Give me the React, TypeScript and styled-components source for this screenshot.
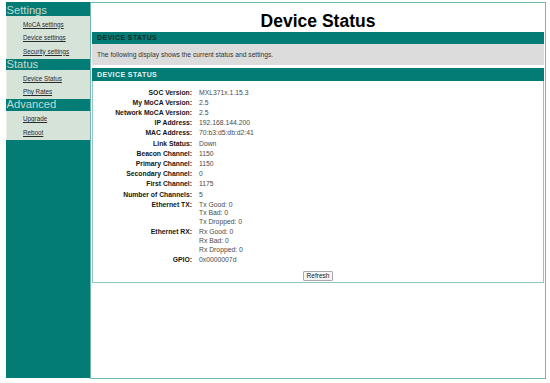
import React from 'react';
import styled, { createGlobalStyle } from 'styled-components';

const teal = '#037c76';
const frame = '#71b8b2';

const GlobalStyle = createGlobalStyle`
  html, body {
    margin: 0;
    padding: 0;
    background: #fff;
    font-family: "Liberation Sans", Arial, sans-serif;
    color: #222;
  }
`;

const Page = styled.div`
  display: flex;
  height: 377px;
  padding: 2px 4px 0 6px;
`;

const Sidebar = styled.nav`
  width: 84px;
  height: 376px;
  background: ${teal};
  display: flex;
  flex-direction: column;
`;

const SectionTitle = styled.div<{ $first?: boolean }>`
  height: ${(p) => (p.$first ? '14px' : '11.5px')};
  padding-top: ${(p) => (p.$first ? '2px' : '0')};
  box-sizing: border-box;
  font-size: 11.2px;
  line-height: ${(p) => (p.$first ? '12px' : '11px')};
  color: #c6d9d0;
  padding-left: 0.5px;
`;

const LinkList = styled.ul`
  list-style: none;
  margin: 0;
  padding: 1.5px 0 0.5px;
  background: #d6e3d9;
  border-left: 1px solid #e8efe9;
`;

const NavItem = styled.li`
  height: 13.5px;
  font-size: 6.3px;
  line-height: 13.5px;
  padding-left: 16px;
`;

const NavLink = styled.a`
  color: #2b2b2b;
  text-decoration: underline;
`;

const Main = styled.main`
  flex: 1;
  border: 1px solid ${frame};
  padding: 0 1px;
  display: flex;
  flex-direction: column;
`;

const Title = styled.h1`
  margin: 0;
  height: 29px;
  box-sizing: border-box;
  padding-top: 7px;
  font-size: 17.5px;
  line-height: 22px;
  font-weight: bold;
  text-align: center;
  color: #000;
`;

const Bar = styled.div<{ $light?: boolean }>`
  height: ${(p) => (p.$light ? '13px' : '12px')};
  line-height: ${(p) => (p.$light ? '13px' : '12px')};
  background: ${teal};
  padding-left: 5px;
  font-size: 7px;
  font-weight: bold;
  letter-spacing: 0.4px;
  color: ${(p) => (p.$light ? '#e6f2f0' : '#0f2d2b')};
`;

const Note = styled.div`
  height: 21px;
  line-height: 21px;
  background: #dcdcdc;
  padding-left: 5px;
  font-size: 6.7px;
  color: #333;
  margin-bottom: 3px;
`;

const StatusBox = styled.section`
  border: 1px solid #8ec6c1;
  border-top: none;
  padding: 7.5px 0 1px;
  display: flex;
  flex-direction: column;
`;

const Grid = styled.div`
  display: grid;
  grid-template-columns: 99px 1fr;
  column-gap: 7px;
  row-gap: 1.5px;
  font-size: 6.8px;
  line-height: 8.7px;
`;

const Label = styled.div`
  text-align: right;
  font-weight: bold;
  color: #151515;
`;

const Value = styled.div`
  color: #4a4a4a;
`;

const ButtonRow = styled.div`
  display: flex;
  justify-content: center;
  margin-top: 6.5px;
`;

const Button = styled.button`
  height: 10px;
  padding: 0 3px;
  font-family: "Liberation Sans", Arial, sans-serif;
  font-size: 6.5px;
  line-height: 8px;
  color: #222;
  background: #f5f5f5;
  border: 1px solid #a9a9a9;
  border-radius: 1px;
`;

const nav = [
  { title: 'Settings', links: ['MoCA settings', 'Device settings', 'Security settings'] },
  { title: 'Status', links: ['Device Status', 'Phy Rates'] },
  { title: 'Advanced', links: ['Upgrade', 'Reboot'] },
];

const rows: [string, string[]][] = [
  ['SOC Version:', ['MXL371x.1.15.3']],
  ['My MoCA Version:', ['2.5']],
  ['Network MoCA Version:', ['2.5']],
  ['IP Address:', ['192.168.144.200']],
  ['MAC Address:', ['70:b3:d5:db:d2:41']],
  ['Link Status:', ['Down']],
  ['Beacon Channel:', ['1150']],
  ['Primary Channel:', ['1150']],
  ['Secondary Channel:', ['0']],
  ['First Channel:', ['1175']],
  ['Number of Channels:', ['5']],
  ['Ethernet TX:', ['Tx Good: 0', 'Tx Bad: 0', 'Tx Dropped: 0']],
  ['Ethernet RX:', ['Rx Good: 0', 'Rx Bad: 0', 'Rx Dropped: 0']],
  ['GPIO:', ['0x0000007d']],
];

const App: React.FC = () => {
  return (
    <>
      <GlobalStyle />
      <Page>
        <Sidebar>
          {nav.map((section, i) => (
            <React.Fragment key={section.title}>
              <SectionTitle $first={i === 0}>{section.title}</SectionTitle>
              <LinkList>
                {section.links.map((link) => (
                  <NavItem key={link}>
                    <NavLink href="#">{link}</NavLink>
                  </NavItem>
                ))}
              </LinkList>
            </React.Fragment>
          ))}
        </Sidebar>
        <Main>
          <Title>Device Status</Title>
          <Bar>DEVICE STATUS</Bar>
          <Note>The following display shows the current status and settings.</Note>
          <Bar $light>DEVICE STATUS</Bar>
          <StatusBox>
            <Grid>
              {rows.map(([label, values]) => (
                <React.Fragment key={label}>
                  <Label>{label}</Label>
                  <Value>
                    {values.map((v) => (
                      <div key={v}>{v}</div>
                    ))}
                  </Value>
                </React.Fragment>
              ))}
            </Grid>
            <ButtonRow>
              <Button type="button">Refresh</Button>
            </ButtonRow>
          </StatusBox>
        </Main>
      </Page>
    </>
  );
};

export default App;
